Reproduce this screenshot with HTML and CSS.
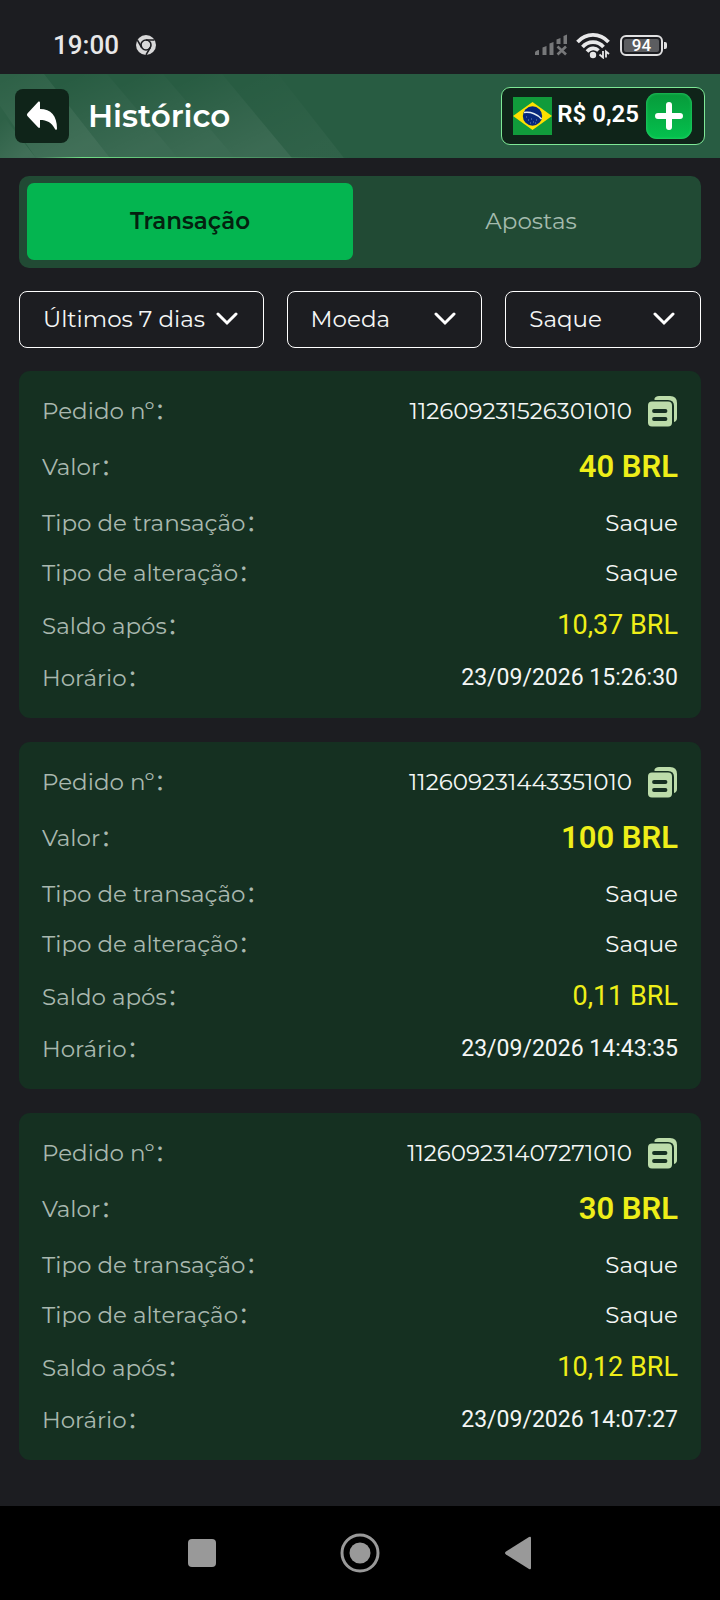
FILE: index.html
```html
<!DOCTYPE html>
<html lang="pt-BR">
<head>
  <meta charset="UTF-8" />
  <meta name="viewport" content="width=device-width, initial-scale=1.0"/>
  <title>Histórico</title>
  <link rel="stylesheet" href="styles.css">
</head>
<body>
  <div class="status-bar">
    <span class="clock">19:00</span>
    <svg class="chrome-icon" width="20" height="20" viewBox="0 0 20 20">
      <circle cx="10" cy="10" r="10" fill="#d8d8d9"/>
      <circle cx="10" cy="10" r="5" fill="none" stroke="#1c1d21" stroke-width="1.6"/>
      <path d="M10 5H18.5M5.7 12.5L1.4 5.2M14.3 12.5L10 19.8" stroke="#1c1d21" stroke-width="1.6"/>
    </svg>
    <div class="status-icons">
      <svg width="34" height="22" viewBox="0 0 34 22" fill="#77787a">
        <path d="M1 21V18.500Q1.500 16.500 5 16V21ZM8.500 21V13.500L12.500 12V21ZM15.500 21V9.500L19.500 8V21ZM22.500 10V5.500L26.500 4V10ZM29.500 10V2L33 0.500V10Z"/>
        <path d="M23.500 12.500L32 20.500M32 12.500L23.500 20.500" stroke="#77787a" stroke-width="2.600"/>
      </svg>
      <svg width="34" height="27" viewBox="0 0 34 27" fill="none" stroke="#e8e8e9" stroke-width="3.600">
        <path d="M1.500 10C10 0.500 24 0.500 32.500 10M6.500 15C12 8.500 22 8.500 27.500 15M11 19.500C14.500 15.500 19.500 15.500 22.500 18.500"/>
        <circle cx="17" cy="23" r="3.200" fill="#e8e8e9" stroke="none"/>
        <path d="M27 19V25.500L23.500 22.500M30 25.500V19.500L33 22" stroke-width="1.800"/>
      </svg>
      <div class="battery"><span>94</span></div>
    </div>
  </div>

  <header>
    <svg class="stripes" viewBox="0 0 360 84" preserveAspectRatio="xMinYMin slice" aria-hidden="true">
      <defs>
        <linearGradient id="stripe" x1="0" y1="0.2" x2="0.6" y2="1">
          <stop offset="0" stop-color="#fff" stop-opacity="0"/>
          <stop offset="1" stop-color="#fff" stop-opacity="0.090"/>
        </linearGradient>
        <linearGradient id="line" x1="0" x2="1">
          <stop offset="0" stop-color="#70de85" stop-opacity="0"/>
          <stop offset="0.150" stop-color="#70de85"/>
          <stop offset="1" stop-color="#70de85" stop-opacity="0"/>
        </linearGradient>
      </defs>
      <path d="M0 0H44L110 84H0Z" fill="#fff" opacity="0.030"/>
      <g fill="url(#stripe)">
        <path d="M0 38L36 84H0Z"/>
        <path d="M-22 0H44L110 84H36Z"/>
        <path d="M44 0H107L178 84H110Z"/>
        <path d="M107 0H163L235 84H178Z"/>
        <path d="M163 0H222L292 84H235Z"/>
        <path d="M222 0H278L344 84H292Z" opacity="0.400"/>
      </g>
      <rect x="35" y="83" width="315" height="1" fill="url(#line)"/>
    </svg>
    <button class="back-btn" aria-label="Voltar">
      <svg width="32" height="30" viewBox="0 0 32 30" fill="#fff">
        <path d="M12.500 0.600Q14 0 14 1.800V8C25 8 31 15 31 27.500Q30.500 30 29 28C25.500 21.500 21 19 14 19V25.500Q14 27.800 12.200 26.600L1.400 15Q0.400 13.800 1.400 12.600Z"/>
      </svg>
    </button>
    <h1>Histórico</h1>
    <div class="balance">
      <svg class="flag" width="39" height="38" viewBox="0 0 39 38" role="img" aria-label="Brasil">
        <path fill="#119b3b" d="M0 0H39V38H0Z"/>
        <path fill="#fee000" d="M0 19L19.500 5L39 19L19.500 33Z"/>
        <circle cx="19.500" cy="19" r="9.700" fill="#07277c"/>
        <path d="M11 15.500C18 14.500 25 17.500 28.500 22" fill="none" stroke="#e4eef3" stroke-width="1.500"/>
        <path d="M13 20H14M15 23H16M18 22H19M20 25H21M23 23H24M17 26H18M22 26H23" stroke="#6f88bd"/>
      </svg>
      <span>R$ 0,25</span>
      <button class="add-btn" aria-label="Depositar">
        <svg width="28" height="28" viewBox="0 0 28 28" stroke="#fff" stroke-width="6" stroke-linecap="round">
          <path d="M14 3V25M3 14H25"/>
        </svg>
      </button>
    </div>
  </header>

  <main>
    <div class="tabs">
      <button class="tab active">Transação</button>
      <button class="tab">Apostas</button>
    </div>

    <div class="filters">
      <div class="filter filter-wide">
        <select aria-label="Período"><option>Últimos 7 dias</option><option>Últimos 30 dias</option></select>
        <svg width="22" height="14" viewBox="0 0 22 14"><path d="M2 2L11 11L20 2"/></svg>
      </div>
      <div class="filter">
        <select aria-label="Moeda"><option>Moeda</option><option>BRL</option></select>
        <svg width="22" height="14" viewBox="0 0 22 14"><path d="M2 2L11 11L20 2"/></svg>
      </div>
      <div class="filter">
        <select aria-label="Tipo"><option>Saque</option><option>Depósito</option></select>
        <svg width="22" height="14" viewBox="0 0 22 14"><path d="M2 2L11 11L20 2"/></svg>
      </div>
    </div>

    <div class="orders" id="order-list"></div>
  </main>

  <nav class="system-nav">
    <button aria-label="Recentes">
      <svg width="40" height="40" viewBox="0 0 40 40"><rect x="6" y="6" width="28" height="28" rx="4" fill="#999"/></svg>
    </button>
    <button aria-label="Início">
      <svg width="40" height="40" viewBox="0 0 40 40"><circle cx="20" cy="20" r="18" fill="none" stroke="#999" stroke-width="3"/><circle cx="20" cy="20" r="10.500" fill="#999"/></svg>
    </button>
    <button aria-label="Voltar">
      <svg width="40" height="40" viewBox="0 0 40 40"><path d="M33 5V35Q33 37 31 36L8 21.500Q6 20 8 18.500L31 4Q33 3 33 5Z" fill="#999"/></svg>
    </button>
  </nav>

  <script>
    const orders = [
      { id: "112609231526301010", value: "40 BRL", after: "10,37 BRL", time: "23/09/2026 15:26:30" },
      { id: "112609231443351010", value: "100 BRL", after: "0,11 BRL", time: "23/09/2026 14:43:35" },
      { id: "112609231407271010", value: "30 BRL", after: "10,12 BRL", time: "23/09/2026 14:07:27" }
    ];

    function renderOrders() {
      const orderList = document.getElementById("order-list");
      orders.forEach(order => {
        const dl = document.createElement("dl");
        dl.className = "order";
        dl.innerHTML = `
          <div class="row">
            <dt>Pedido nº：</dt>
            <dd class="order-id">${order.id}
              <button class="copy-btn" aria-label="Copiar" onclick="copyId('${order.id}')">
                <svg width="30" height="32" viewBox="0 0 30 32">
                  <path d="M6.500 3.500Q7.500 1 11 1H22Q29 1 29 8V23Q29 26 26 27V11Q26 5 20 5H6.500Z" fill="#bcdcaa"/>
                  <rect x="0" y="6.500" width="24" height="25" rx="4" fill="#bcdcaa"/>
                  <path d="M6 16H17.500M6 24H17.500" stroke="#153021" stroke-width="3.800" stroke-linecap="round"/>
                </svg>
              </button>
            </dd>
          </div>
          <div class="row"><dt>Valor：</dt><dd class="value">${order.value}</dd></div>
          <div class="row"><dt>Tipo de transação：</dt><dd>Saque</dd></div>
          <div class="row"><dt>Tipo de alteração：</dt><dd>Saque</dd></div>
          <div class="row"><dt>Saldo após：</dt><dd class="after">${order.after}</dd></div>
          <div class="row"><dt>Horário：</dt><dd class="time">${order.time}</dd></div>
        `;
        orderList.appendChild(dl);
      });
    }

    function copyId(id) {
      navigator.clipboard.writeText(id);
    }

    renderOrders();
  </script>
</body>
</html>
```
FILE: styles.css
```css
* {
  box-sizing: border-box;
}

body {
  font-family: Montserrat, Inter, "Noto Sans CJK SC", sans-serif;
  font-size: 23px;
  margin: 0;
  min-height: 100vh;
  display: flex;
  flex-direction: column;
  background-color: #1c1d21;
  color: #f4f6f5;
}

button {
  font: inherit;
  border: none;
  padding: 0;
  cursor: pointer;
}

svg {
  display: block;
}

.status-bar {
  display: flex;
  align-items: center;
  height: 74px;
  padding: 16px 57px 0 53px;
  font-family: Roboto, sans-serif;
}

.clock {
  font-size: 26px;
  font-weight: 500;
  color: #e8e8e9;
}

.chrome-icon {
  margin-left: 17px;
}

.status-icons {
  display: flex;
  align-items: center;
  gap: 8px;
  margin-left: auto;
}

.battery {
  position: relative;
  width: 43px;
  height: 21px;
  margin-left: 2px;
  padding: 2px;
  border: 2px solid #e0e0e1;
  border-radius: 6px;
}

.battery span {
  display: block;
  border-radius: 2px;
  background-color: #5c5d60;
  color: #fff;
  font-size: 17px;
  font-weight: 500;
  line-height: 13px;
  text-align: center;
}

.battery::after {
  content: "";
  position: absolute;
  top: 5px;
  right: -6px;
  width: 3px;
  height: 7px;
  border-radius: 0 2px 2px 0;
  background-color: #e0e0e1;
}

header {
  position: relative;
  display: flex;
  align-items: center;
  height: 84px;
  padding: 0 15px;
  background-color: #285c42;
}

.stripes {
  position: absolute;
  left: 0;
  top: 0;
  height: 100%;
}

.back-btn {
  position: relative;
  display: grid;
  place-items: center;
  width: 54px;
  height: 54px;
  border-radius: 8px;
  background-color: #0f2419;
}

h1 {
  position: relative;
  margin: 0 0 0 19px;
  font-size: 31px;
  font-weight: 600;
  color: #fff;
}

.balance {
  display: flex;
  align-items: center;
  height: 58px;
  margin-left: auto;
  padding: 0 12px 0 11px;
  border: 1px solid #7ee896;
  border-radius: 9px;
  background-color: #0f2419;
  color: #fff;
  font-family: Roboto, sans-serif;
  font-size: 24px;
  font-weight: 600;
}

.balance span {
  margin: 0 7px 4px 5px;
}

.add-btn {
  display: grid;
  place-items: center;
  width: 46px;
  height: 46px;
  border-radius: 11px;
  background: linear-gradient(#079a3a, #04c14e);
  box-shadow: inset 0 0 3px #35d973;
}

main {
  flex: 1;
  display: flex;
  flex-direction: column;
  gap: 23px;
  padding: 18px 19px 46px;
}

.tabs {
  display: flex;
  border-radius: 10px;
  background-color: #214a34;
}

.tab {
  flex: 1;
  height: 77px;
  margin: 7px 7px 8px 8px;
  padding-bottom: 2px;
  border-radius: 7px;
  background-color: transparent;
  color: #a4bbae;
}

.tab.active {
  background-color: #04b550;
  color: #04210f;
  font-weight: 600;
}

.filters {
  display: flex;
  gap: 23px;
}

.filter {
  flex: 4;
  min-width: 0;
  display: grid;
  align-items: center;
}

.filter-wide {
  flex: 5;
}

/* select and arrow share one grid cell */
.filter select,
.filter svg {
  grid-area: 1 / 1;
}

.filter select {
  appearance: none;
  width: 100%;
  height: 57px;
  padding: 0 23px 2px;
  border: 1px solid #fff;
  border-radius: 8px;
  background-color: transparent;
  color: inherit;
  font: inherit;
}

.filter svg {
  justify-self: end;
  margin: 0 26px 2px 0;
  fill: none;
  stroke: #fff;
  stroke-width: 3;
  stroke-linecap: round;
  pointer-events: none;
}

.orders {
  display: flex;
  flex-direction: column;
  gap: 24px;
}

.order {
  display: flex;
  flex-direction: column;
  gap: 16px;
  margin: 0;
  padding: 23px;
  border-radius: 11px;
  background-color: #153021;
  line-height: 34px;
}

.row {
  display: flex;
  justify-content: space-between;
  align-items: center;
}

dt {
  color: #a9b8af;
}

dd {
  margin: 0;
}

.order-id {
  display: flex;
  align-items: center;
  gap: 16px;
}

.copy-btn {
  background: none;
}

.value,
.after,
.time {
  font-family: Roboto, sans-serif;
}

.value {
  color: #eeee19;
  font-size: 31px;
  font-weight: 600;
  line-height: 46px;
}

.after {
  color: #eeee19;
  font-size: 27px;
  line-height: 39px;
}

.system-nav {
  display: flex;
  justify-content: center;
  align-items: center;
  gap: 118px;
  height: 94px;
  background-color: #000;
}

.system-nav button {
  background: none;
}
```
